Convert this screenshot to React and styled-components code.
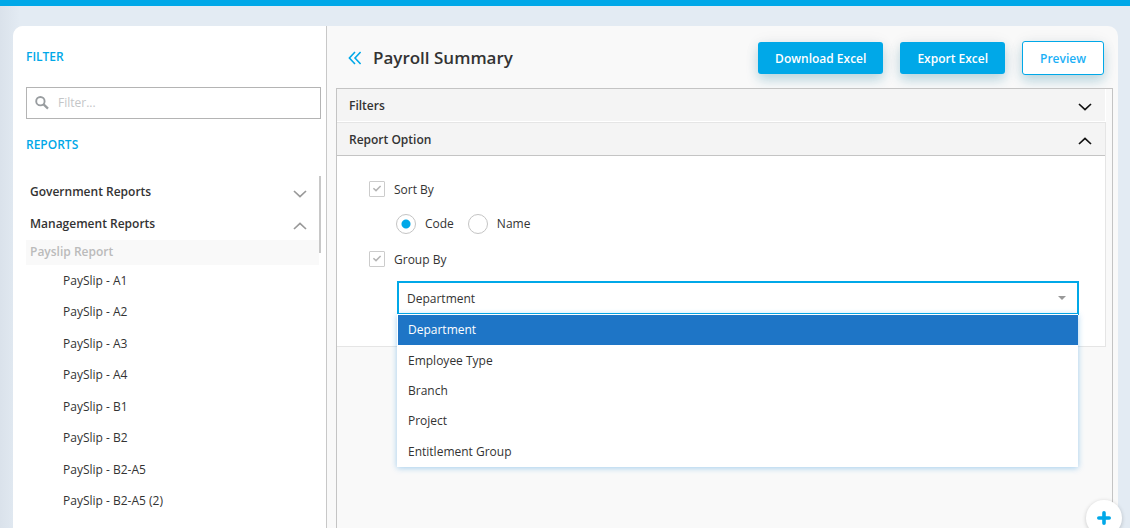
import React, { useState } from 'react'

import styled, { createGlobalStyle, css } from 'styled-components'

const PAYSLIPS = [
  'PaySlip - A1',
  'PaySlip - A2',
  'PaySlip - A3',
  'PaySlip - A4',
  'PaySlip - B1',
  'PaySlip - B2',
  'PaySlip - B2-A5',
  'PaySlip - B2-A5 (2)'
]

const GROUPS = [ 'Department', 'Employee Type', 'Branch', 'Project', 'Entitlement Group' ]

export default function App () {
  return <>
    <GlobalStyle />
    <Page>
      <Card>
        <Sidebar />
        <Report />
      </Card>
      <AddButton type='button' aria-label='Add'>
        <svg width='14' height='14' viewBox='0 0 14 14' aria-hidden='true'>
          <path d='M7 1.8v10.4M1.8 7h10.4' stroke='currentColor' strokeWidth='3.6' strokeLinecap='round' />
        </svg>
      </AddButton>
    </Page>
  </>
}

function Sidebar () {
  return <Aside>
    <SideTitle as='label' htmlFor='report-filter'>FILTER</SideTitle>
    <SearchBox>
      <svg width='14' height='14' viewBox='0 0 14 14' fill='none' stroke='currentColor' aria-hidden='true'>
        <circle cx='5.4' cy='5.2' r='4.2' strokeWidth='1.9' />
        <path d='M8.6 8.4l4.4 4.2' strokeWidth='2.3' />
      </svg>
      <SearchInput id='report-filter' type='text' placeholder='Filter...' />
    </SearchBox>
    <SideTitle>REPORTS</SideTitle>
    <Tree>
      <TreeBody>
        <TreeButton type='button' aria-expanded='false'>
          Government Reports
          <Chevron />
        </TreeButton>
        <TreeButton type='button' aria-expanded='true'>
          Management Reports
          <Chevron up />
        </TreeButton>
        <TreeGroup>Payslip Report</TreeGroup>
        <TreeList>
          { PAYSLIPS.map(name => <li key={name}><TreeLink href='#'>{ name }</TreeLink></li>) }
        </TreeList>
      </TreeBody>
      <ScrollThumb />
    </Tree>
  </Aside>
}

function Report () {
  const [ sort, setSort ] = useState('Code')
  const [ group, setGroup ] = useState('Department')

  return <Main>
    <Header>
      <BackButton type='button' aria-label='Collapse'>
        <svg width='14' height='14' viewBox='0 0 14 14' fill='none' stroke='currentColor' strokeWidth='1.6' aria-hidden='true'>
          <path d='M7 1L1.4 7L7 13M12.6 1L7 7l5.6 6' />
        </svg>
      </BackButton>
      <Title>Payroll Summary</Title>
      <Actions>
        <Button type='button'>Download Excel</Button>
        <Button type='button'>Export Excel</Button>
        <Button type='button' $outline>Preview</Button>
      </Actions>
    </Header>
    <Content>
      <Panel>
        <PanelButton type='button' aria-expanded='false'>
          Filters
          <Chevron />
        </PanelButton>
      </Panel>
      <Panel $open>
        <PanelButton type='button' aria-expanded='true'>
          Report Option
          <Chevron up />
        </PanelButton>
        <PanelBody>
          <CheckRow label='Sort By' />
          <RadioRow role='radiogroup' aria-label='Sort By'>
            {
              [ 'Code', 'Name' ].map(name => <RadioLabel key={name}>
                <Radio name='sort' checked={sort === name} onChange={() => setSort(name)} />
                { name }
              </RadioLabel>)
            }
          </RadioRow>
          <CheckRow label='Group By' />
          <Dropdown>
            <Select aria-label='Group By' value={group} onChange={e => setGroup(e.target.value)}>
              { GROUPS.map(name => <option key={name}>{ name }</option>) }
            </Select>
            <Caret />
            <Options role='listbox' aria-label='Group By'>
              {
                GROUPS.map(name => <Option
                  key={name}
                  role='option'
                  aria-selected={group === name}
                  $active={group === name}
                  onClick={() => setGroup(name)}
                >
                  { name }
                </Option>)
              }
            </Options>
          </Dropdown>
        </PanelBody>
      </Panel>
    </Content>
  </Main>
}

function CheckRow ({ label }) {
  return <CheckLabel>
    <CheckCell>
      <Checkbox defaultChecked />
      <svg width='10' height='10' viewBox='0 0 10 10' fill='none' stroke='#b4b4b4' strokeWidth='1.5' aria-hidden='true'>
        <path d='M1.4 4.2L4 6.6L8.6 2' />
      </svg>
    </CheckCell>
    <span>{ label }</span>
  </CheckLabel>
}

function Chevron ({ up }) {
  return <svg width='14' height='8' viewBox='0 0 14 8' fill='none' stroke='currentColor' strokeWidth='1.7' aria-hidden='true'>
    <path d={up ? 'M1 7L7 1.4l6 5.6' : 'M1 1l6 5.6l6-5.6'} />
  </svg>
}

const GlobalStyle = createGlobalStyle`
  * {
    box-sizing: border-box;
  }

  body {
    margin: 0;
    font: 12px/18px 'Open Sans', sans-serif;
    color: #333;
  }

  button, input, select {
    font: inherit;
    color: inherit;
  }

  svg {
    display: block;
    flex: none;
  }
`

const Page = styled.div`
  display: flex;
  min-height: 100vh;
  padding: 20px 12px 0 13px;
  border-top: 6px solid #00a8e8;
  background: linear-gradient(90deg, #dae2eb, #e3ebf3 20px);
`

const Card = styled.div`
  display: flex;
  flex: 1;
  border-radius: 10px 10px 0 0;
  background: #f9f9f9;
  overflow: hidden;
`

const Aside = styled.aside`
  display: flex;
  flex-direction: column;
  flex: none;
  width: 314px;
  padding: 22px 5px 0 13px;
  border-right: 1px solid #c8c8c8;
  background: #fff;
`

const SideTitle = styled.h2`
  margin: 0;
  font-size: 12px;
  line-height: 18px;
  font-weight: 600;
  color: #00a8e8;
`

const SearchBox = styled.div`
  display: flex;
  align-items: center;
  gap: 9px;
  height: 32px;
  margin: 21px 0 17px;
  padding: 0 8px;
  border: 1px solid #b4b4b4;
  color: #999da0;
`

const SearchInput = styled.input`
  flex: 1;
  min-width: 0;
  padding: 0;
  border: 0;
  outline: 0;
  background: none;

  &::placeholder {
    color: #c4c6c8;
    opacity: 1;
  }
`

const Tree = styled.nav`
  display: flex;
  align-items: flex-start;
  margin-top: 22px;
`

const TreeBody = styled.div`
  flex: 1;
`

const ScrollThumb = styled.div`
  width: 2px;
  height: 77px;
  background: #c8c8c8;
`

const TreeButton = styled.button`
  display: flex;
  align-items: center;
  justify-content: space-between;
  width: 100%;
  height: 32px;
  padding: 0 12px 0 4px;
  border: 0;
  background: none;
  font-weight: 600;

  svg {
    margin-top: 4px;
    color: #999;
  }
`

const TreeGroup = styled.div`
  padding: 3px 4px 4px;
  background: #f9f9f9;
  font-weight: 600;
  color: #bbb;
`

const TreeList = styled.ul`
  display: grid;
  grid-auto-rows: 1fr;
  align-items: center;
  min-height: 252px;
  margin: 0;
  padding: 0 0 0 37px;
  list-style: none;
`

const TreeLink = styled.a`
  color: inherit;
  text-decoration: none;
`

const Main = styled.main`
  display: flex;
  flex-direction: column;
  flex: 1;
  min-width: 0;
  padding: 0 5px 0 9px;
`

const Header = styled.header`
  display: flex;
  align-items: center;
  height: 62px;
  padding: 2px 9px 0 12px;
`

const BackButton = styled.button`
  padding: 0;
  border: 0;
  background: none;
  color: #00a8e8;
`

const Title = styled.h1`
  margin: 0 auto 0 11px;
  font-size: 17px;
  line-height: 24px;
  font-weight: 600;
`

const Actions = styled.div`
  display: flex;
  align-items: center;
  gap: 17px;
`

const Button = styled.button`
  height: 32px;
  padding: 2px 17px 0;
  border: 0;
  border-radius: 3px;
  background: #00a8e8;
  box-shadow: 0 6px 12px rgba(0, 120, 160, .24), 0 0 16px rgba(0, 0, 0, .05);
  font-weight: 600;
  color: #fff;

  ${({ $outline }) => $outline && css`
    height: 34px;
    border: 1px solid #00a8e8;
    background: #fff;
    color: #1cb0f6;
  `}
`

const Content = styled.section`
  flex: 1;
  padding-right: 6px;
  border: 1px solid #c4c4c4;
  border-bottom: 0;
`

const Panel = styled.div`
  border: 1px solid #fff;
  border-width: 0 1px 1px 0;

  ${({ $open }) => $open && css`
    border-color: #e5e5e5;
    border-width: 1px 1px 1px 0;
    background: #fff;
  `}
`

const PanelButton = styled.button`
  display: flex;
  align-items: center;
  justify-content: space-between;
  width: 100%;
  height: 32px;
  padding: 1px 13px 0 12px;
  border: 0;
  background: #f4f4f4;
  font-weight: 600;

  svg {
    margin-top: 2px;
    color: #111;
  }
`

const PanelBody = styled.div`
  padding: 25px 26px 31px 32px;
  border-top: 1px solid #c4c4c4;
`

const CheckLabel = styled.label`
  display: flex;
  align-items: center;
  gap: 9px;
  height: 16px;
  font-weight: 500;

  > :last-child {
    padding-top: 2px;
  }
`

const CheckCell = styled.span`
  display: grid;
  place-items: center;

  > * {
    grid-area: 1 / 1;
  }
`

const Checkbox = styled.input.attrs({ type: 'checkbox' })`
  appearance: none;
  width: 16px;
  height: 16px;
  margin: 0;
  border: 1px solid #ccc;
  border-radius: 1px;
  background: #fff;

  &:not(:checked) + svg {
    visibility: hidden;
  }
`

const RadioRow = styled.div`
  display: flex;
  gap: 14px;
  padding: 17px 27px;
`

const RadioLabel = styled.label`
  display: flex;
  align-items: center;
  gap: 9px;
  height: 20px;
`

const Radio = styled.input.attrs({ type: 'radio' })`
  appearance: none;
  width: 20px;
  height: 20px;
  margin: 0;
  border: 1px solid #c4c4c4;
  border-radius: 50%;
  background: #fff;

  &:checked {
    background: radial-gradient(circle, #00a8e8 4px, #fff 5px);
  }
`

const Dropdown = styled.div`
  display: grid;
  align-items: center;
  position: relative;
  margin: 14px 0 0 28px;
`

const Select = styled.select`
  grid-area: 1 / 1;
  appearance: none;
  width: 100%;
  height: 34px;
  padding: 2px 8px 0;
  border: 2px solid #00a8e8;
  border-radius: 0;
  outline: 0;
  background: #fff;
`

const Caret = styled.span`
  grid-area: 1 / 1;
  justify-self: end;
  margin-right: 13px;
  border: 4px solid transparent;
  border-top-color: #999;
  border-bottom: 0;
  pointer-events: none;
`

const Options = styled.ul`
  position: absolute;
  top: 33px;
  left: 0;
  right: 1px;
  z-index: 1;
  display: grid;
  grid-auto-rows: 1fr;
  min-height: 153px;
  margin: 0;
  padding: 0;
  border: 1px solid #fff;
  border-width: 1px 0 0 1px;
  background: #fff;
  box-shadow: 0 1px 6px rgba(30, 140, 220, .4);
  list-style: none;
`

const Option = styled.li`
  display: flex;
  align-items: center;
  padding: 0 10px;
  cursor: pointer;

  ${({ $active }) => $active && css`
    background: #1e75c6;
    color: #fff;
  `}
`

const AddButton = styled.button`
  position: fixed;
  right: 8px;
  bottom: -8px;
  z-index: 2;
  display: grid;
  place-items: center;
  width: 36px;
  height: 36px;
  padding: 0;
  border: 0;
  border-radius: 50%;
  background: #fff;
  box-shadow: 0 1px 4px rgba(0, 0, 0, .2);
  color: #00a8e8;
`
